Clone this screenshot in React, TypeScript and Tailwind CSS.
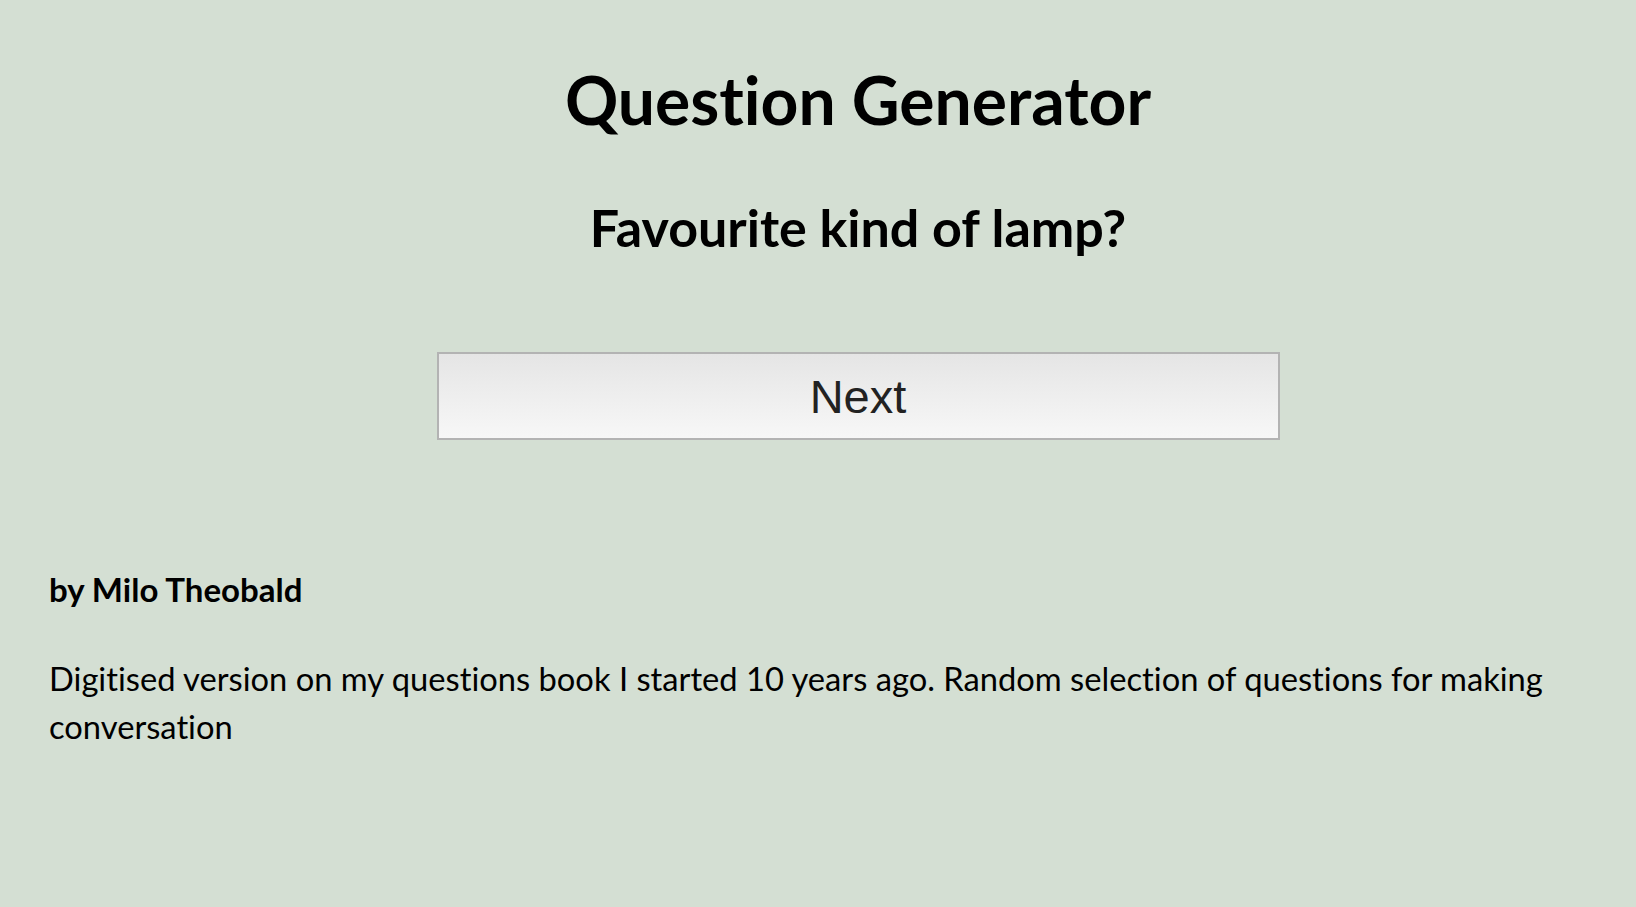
export default function App() {
  return (
    <div
      className="min-h-[907px] w-full bg-[#d4dfd3] text-black [font-variant-ligatures:none]"
      style={{ fontFamily: 'Lato, "Open Sans", sans-serif' }}
    >
      <div className="flex flex-col items-center pl-[80px]">
        <h1 className="mt-[60px] text-[66px] font-bold leading-[80px]">Question Generator</h1>
        <h2 className="mt-[57px] text-[52px] font-bold leading-[60px]">Favourite kind of lamp?</h2>
        <button
          className="mt-[95px] h-[88px] w-[843px] border-2 border-[#b3b3b3] bg-gradient-to-b from-[#e5e5e5] to-[#f7f7f7] text-[47px] leading-none text-[#222]"
          style={{ fontFamily: '"Liberation Sans", Arial, sans-serif' }}
        >
          Next
        </button>
      </div>
      <div className="px-[49px]">
        <p className="mt-[127px] text-[33px] font-bold leading-[44px]">by Milo Theobald</p>
        <p className="mt-[44px] text-[32.7px] leading-[48px]">
          Digitised version on my questions book I started 10 years ago. Random selection of questions for making conversation
        </p>
      </div>
    </div>
  );
}
